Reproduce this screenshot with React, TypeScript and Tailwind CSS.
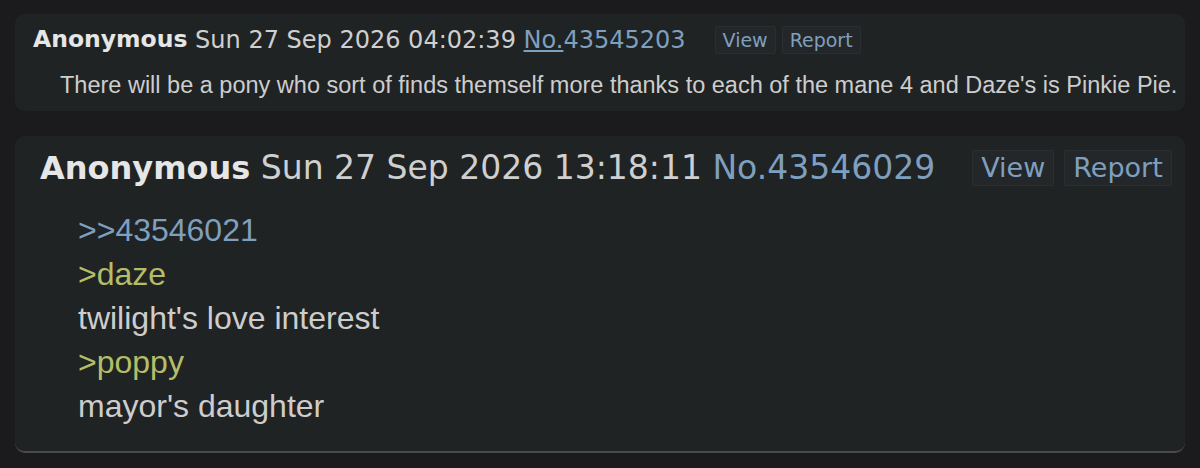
const head = { fontFamily: '"DejaVu Sans", Verdana, sans-serif' };
const body = { fontFamily: '"Liberation Sans", Arial, sans-serif' };

function Btn({ label, small }: { label: string; small?: boolean }) {
  return (
    <span
      className={
        small
          ? 'rounded-[2px] border border-[#2a2e31] bg-[#23272a] px-[7px] text-[19px] leading-[26px] text-[#7f9fbf]'
          : 'rounded-[2px] border border-[#2a2e31] bg-[#23272a] px-[8px] text-[27px] leading-[34px] text-[#7f9fbf]'
      }
    >
      {label}
    </span>
  );
}

export default function App() {
  return (
    <div className="flex h-[468px] w-[1200px] flex-col gap-[25px] bg-[#1b1b1e] px-[15px] pt-[14px]">
      <div className="h-[97px] rounded-[10px] bg-[#202324] pl-[18px] pt-[8px]">
        <div className="flex items-center whitespace-pre" style={head}>
          <span className="text-[23.5px] font-bold text-[#e6e6e6]">Anonymous</span>
          <span className="text-[24px] text-[#cfcfcf]"> Sun 27 Sep 2026 04:02:39 </span>
          <span className="text-[24px] text-[#7f9fbf]">
            <span className="underline">No.</span>43545203
          </span>
          <span className="ml-[29px] flex gap-[6px]">
            <Btn label="View" small />
            <Btn label="Report" small />
          </span>
        </div>
        <p className="mt-[10px] pl-[27px] text-[23.5px] text-[#cdcdcd]" style={body}>
          There will be a pony who sort of finds themself more thanks to each of the mane 4 and Daze's is Pinkie Pie.
        </p>
      </div>

      <div className="h-[317px] rounded-[10px] border-b-2 border-[#4a4a4a] bg-[#202324] pl-[25px] pt-[7px]">
        <div className="flex items-center whitespace-pre" style={head}>
          <span className="text-[32px] font-bold text-[#e6e6e6]">Anonymous</span>
          <span className="text-[33px] text-[#cfcfcf]"> Sun 27 Sep 2026 13:18:11 </span>
          <span className="text-[33px] text-[#7f9fbf]">No.43546029</span>
          <span className="ml-[37px] flex gap-[10px]">
            <Btn label="View" />
            <Btn label="Report" />
          </span>
        </div>
        <div className="mt-[15px] pl-[38px] text-[32px] leading-[44.2px] text-[#cdcdcd]" style={body}>
          <div className="text-[#7f9fbf]">&gt;&gt;43546021</div>
          <div className="text-[#b5bd68]">&gt;daze</div>
          <div>twilight's love interest</div>
          <div className="text-[#b5bd68]">&gt;poppy</div>
          <div>mayor's daughter</div>
        </div>
      </div>
    </div>
  );
}
